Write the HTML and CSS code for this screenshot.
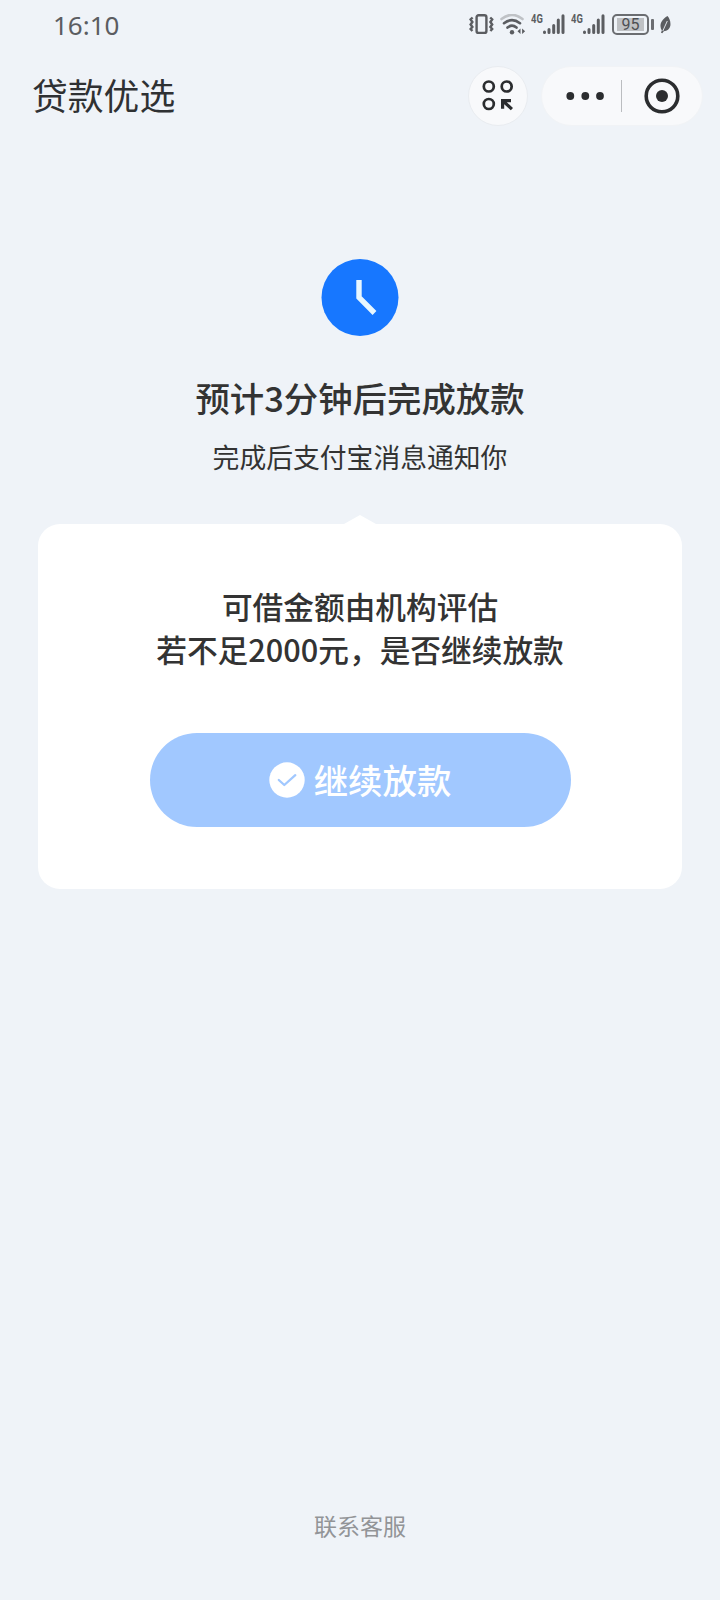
FILE: index.html
```html
<!DOCTYPE html>
<html lang="zh-CN">
<head>
<meta charset="utf-8">
<title>贷款优选</title>
<link rel="stylesheet" href="styles.css">
</head>
<body>
<div class="screen">
  <header class="status">
    <span class="time">16:10</span>
    <div class="status-icons">
      <svg class="vibrate" width="26" height="22" viewBox="0 0 26 22" fill="none" stroke="#5b5d61">
        <rect x="7.600" y="1.300" width="9.800" height="17.600" rx="2" stroke-width="2.400"/>
        <path d="M3.600 3.500L1.600 5.500 3.400 8 1.600 10.500 3.400 13 1.600 15 3.400 17M21.200 3.500l2 2-1.800 2.500 1.800 2.500-1.800 2.500 1.800 2-1.800 2" stroke-width="2.400"/>
      </svg>
      <svg class="wifi" width="27" height="22" viewBox="0 0 27 22" fill="none" stroke-linecap="round">
        <path d="M1.500 5Q12-3.200 22.500 5" stroke="#bfc2c6" stroke-width="2.600"/>
        <path d="M4 9.200Q12 3 20 9.200M7.500 13.600Q12 9.800 16.500 13.600" stroke="#5b5d61" stroke-width="2.600"/>
        <circle cx="12" cy="18.200" r="2.200" fill="#5b5d61"/>
        <path d="M20.500 14.500v5.500l-3-2.700zM22.100 14.500v5.500l3-2.700z" fill="#5b5d61"/>
      </svg>
      <span class="net"><span class="net-label">4G</span></span>
      <svg class="bars" width="22" height="22" viewBox="0 0 22 22" stroke="#5b5d61" stroke-width="3" stroke-linecap="round">
        <path d="M1.500 18v.4M6 15.500v2.900M10.700 11.500v6.900M15.300 6v12.400M20 1.800v16.600"/>
      </svg>
      <span class="net net-second"><span class="net-label">4G</span></span>
      <svg class="bars" width="22" height="22" viewBox="0 0 22 22" stroke="#5b5d61" stroke-width="3" stroke-linecap="round">
        <path d="M1.500 18v.4M6 15.500v2.900M10.700 11.500v6.900M15.300 6v12.400M20 1.800v16.600"/>
      </svg>
      <div class="battery"><span class="level">95</span></div>
      <i class="battery-cap"></i>
      <svg class="leaf" width="11" height="18" viewBox="0 0 11 18">
        <path d="M7.500 0C9.500 2 11 6 10.300 10Q9 15 3.800 15.300L2.300 17.300 1 16.700 1.800 14.500C-1 10 .5 4 7.500 0Z" fill="#5b5d61"/>
        <path d="M7.300 5L2.800 15" stroke="#eff3f8" stroke-width=".9"/>
      </svg>
    </div>
  </header>

  <nav class="navbar">
    <h1 class="title">贷款优选</h1>
    <button class="apps" aria-label="小程序">
      <svg width="32" height="32" viewBox="0 0 32 32" fill="none" stroke="#2b2d2f" stroke-width="2.700">
        <circle cx="6.800" cy="6.500" r="5"/><circle cx="24.700" cy="6.500" r="5"/><circle cx="6.800" cy="24" r="5"/>
        <path d="M19 19H29V22.200H24.800L31 28 28.800 30.300 22.200 24.300V28.800H19Z" fill="#2b2d2f" stroke="none"/>
      </svg>
    </button>
    <div class="capsule">
      <svg class="dots" width="38" height="8" viewBox="0 0 38 8" fill="#2b2d2f">
        <circle cx="4.300" cy="4" r="3.900"/><circle cx="19.300" cy="4" r="3.900"/><circle cx="34" cy="4" r="3.900"/>
      </svg>
      <i class="divider"></i>
      <svg class="close" width="36" height="36" viewBox="0 0 36 36">
        <circle cx="18" cy="18" r="15.800" fill="none" stroke="#2b2d2f" stroke-width="3.600"/>
        <circle cx="18" cy="18" r="6" fill="#2b2d2f"/>
      </svg>
    </div>
  </nav>

  <main class="content">
    <svg class="clock" width="78" height="77" viewBox="0 0 78 77">
      <circle cx="39" cy="38.500" r="38.500" fill="#1777ff"/>
      <path d="M38 21v17.500L53.500 54" fill="none" stroke="#e8f7ff" stroke-width="5.400"/>
    </svg>
    <h2 class="headline">预计3分钟后完成放款</h2>
    <p class="sub">完成后支付宝消息通知你</p>

    <section class="card">
      <p class="question">可借金额由机构评估<br>若不足2000元，是否继续放款</p>
      <button class="confirm">
        <svg width="36" height="36" viewBox="0 0 36 36">
          <circle cx="18" cy="18" r="17.700" fill="#fff"/>
          <path d="M9.800 18l5.500 5 11-9.800" fill="none" stroke="#a1c8ff" stroke-width="2.300" stroke-linecap="round" stroke-linejoin="round"/>
        </svg>
        <span class="confirm-label">继续放款</span>
      </button>
    </section>
  </main>

  <footer class="footer">联系客服</footer>
</div>
</body>
</html>
```
FILE: styles.css
```css
* {
  box-sizing: border-box;
}

body {
  margin: 0;
  background: #eff3f8;
  color: #333;
  font-family: "Noto Sans CJK SC", sans-serif;
}

h1, h2, p {
  margin: 0;
}

button {
  border: 0;
  padding: 0;
  font-family: inherit;
}

svg {
  display: block;
  flex: none;
}

.screen {
  display: flex;
  flex-direction: column;
  width: 720px;
  height: 1600px;
  overflow: hidden;
}

.status {
  display: flex;
  justify-content: space-between;
  height: 48px;
  padding: 0 49px 0 53px;
  color: #5b5d61;
}

.time {
  font: 400 26px/50px "Noto Sans", sans-serif;
}

.status-icons {
  display: flex;
  align-items: flex-start;
  padding-top: 14px;
}

.wifi {
  margin-left: 5px;
}

.net {
  width: 13px;
  margin-left: 4px;
  font: 700 12.5px/10px Roboto, sans-serif;
}

.net-label {
  display: inline-block;
  transform: scaleX(.75);
  transform-origin: 0 0;
}

.net + .bars {
  margin-left: -1px;
}

.net-second {
  margin-left: 6px;
}

.battery {
  width: 37px;
  height: 21px;
  margin-left: 7px;
  padding: 2px;
  border: 2px solid #6b6d71;
  border-radius: 5px;
}

.level {
  display: block;
  width: 27px;
  height: 13px;
  margin-left: 1px;
  background: #bfc1c4;
  color: #4e5054;
  font: 400 16px/13px Roboto, sans-serif;
  text-align: center;
}

.battery-cap {
  width: 3px;
  height: 11px;
  margin: 5px 6px 0 2px;
  border-radius: 1px;
  background: #6b6d71;
}

.leaf {
  margin-top: 2px;
}

.navbar {
  display: flex;
  align-items: center;
  height: 96px;
  padding: 0 17px 0 32px;
}

.title {
  flex: 1;
  padding-bottom: 4px;
  color: #2f3133;
  font-size: 35.8px;
  font-weight: 400;
  line-height: 48px;
}

.apps {
  display: flex;
  align-items: center;
  justify-content: center;
  width: 60px;
  height: 60px;
  margin-right: 13px;
  border: 1px solid #e9ecf0;
  border-radius: 50%;
  background: #f8f9fb;
}

.capsule {
  display: flex;
  align-items: center;
  width: 162px;
  height: 60px;
  padding-left: 24px;
  border: 1px solid #f1f3f6;
  border-radius: 30px;
  background: #f8f9fb;
}

.dots {
  margin-top: -1px;
}

.divider {
  width: 1px;
  height: 32px;
  margin: 0 22px 0 17px;
  background: #bbbdc0;
}

.close {
  margin-top: -1px;
}

.content {
  display: flex;
  flex: 1;
  flex-direction: column;
  align-items: center;
  padding-top: 115px;
}

.headline {
  margin-top: 36px;
  font-size: 34.400px;
  font-weight: 500;
  line-height: 50px;
}

.sub {
  margin-top: 15px;
  font-size: 26.800px;
  line-height: 40px;
}

.card {
  position: relative;
  display: flex;
  flex-direction: column;
  align-items: center;
  width: 644px;
  height: 365px;
  margin-top: 47px;
  padding-top: 60px;
  border-radius: 22px;
  background: #fff;
}

/* Pointer on the top edge of the card */
.card::before {
  content: "";
  position: absolute;
  top: -9px;
  left: 306px;
  border: solid transparent;
  border-width: 0 16px 9px;
  border-bottom-color: #fff;
}

.question {
  font-size: 30.700px;
  font-weight: 500;
  line-height: 43px;
  text-align: center;
}

.confirm {
  display: flex;
  align-items: center;
  justify-content: center;
  gap: 9px;
  width: 421px;
  height: 94px;
  margin-top: 63px;
  border-radius: 47px;
  background: #a1c8ff;
  color: #fff;
  font-size: 34.400px;
  font-weight: 500;
  line-height: 48px;
}

.confirm-label {
  padding-bottom: 3px;
}

.footer {
  height: 92px;
  color: #929497;
  font-size: 23px;
  line-height: 34px;
  text-align: center;
}
```
